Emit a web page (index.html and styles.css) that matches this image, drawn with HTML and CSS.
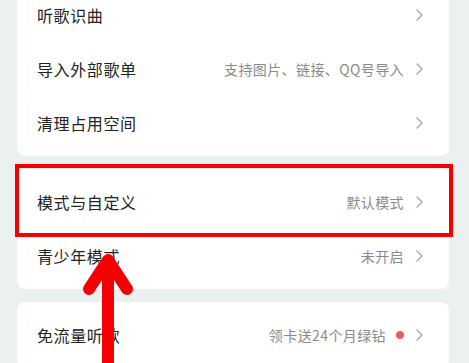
FILE: index.html
```html
<!DOCTYPE html>
<html lang="zh-CN">
<head>
<meta charset="utf-8">
<link rel="stylesheet" href="styles.css">
</head>
<body>
<div class="page">
  <div class="card">
    <div class="row"><span class="label">听歌识曲</span><span class="right"><svg class="chev" viewBox="0 0 7 12"><polyline points="1,1 6,6 1,11"/></svg></span></div>
    <div class="row"><span class="label">导入外部歌单</span><span class="right"><span class="sub">支持图片、链接、QQ号导入</span><svg class="chev" viewBox="0 0 7 12"><polyline points="1,1 6,6 1,11"/></svg></span></div>
    <div class="row"><span class="label">清理占用空间</span><span class="right"><svg class="chev" viewBox="0 0 7 12"><polyline points="1,1 6,6 1,11"/></svg></span></div>
  </div>
  <div class="card">
    <div class="row"><span class="label">模式与自定义</span><span class="right"><span class="sub">默认模式</span><svg class="chev" viewBox="0 0 7 12"><polyline points="1,1 6,6 1,11"/></svg></span></div>
    <div class="row"><span class="label">青少年模式</span><span class="right"><span class="sub">未开启</span><svg class="chev" viewBox="0 0 7 12"><polyline points="1,1 6,6 1,11"/></svg></span></div>
  </div>
  <div class="card">
    <div class="row"><span class="label">免流量听歌</span><span class="right"><span class="sub">领卡送24个月绿钻</span><span class="dot"></span><svg class="chev" viewBox="0 0 7 12"><polyline points="1,1 6,6 1,11"/></svg></span></div>
  </div>
</div>
<div class="highlight"></div>
<svg class="arrow" viewBox="0 0 469 363" width="469" height="363">
  <line x1="108" y1="262" x2="108" y2="380"/>
  <polyline points="89,289 108,260 127,289"/>
</svg>
</body>
</html>
```
FILE: styles.css
```css
html, body {
  margin: 0;
  padding: 0;
}
body {
  width: 469px;
  height: 363px;
  overflow: hidden;
  background: #ebf0f0;
  font-family: "Noto Sans CJK SC", "Noto Sans", sans-serif;
  position: relative;
}
.page {
  margin-top: -18px;
  padding: 0 20px 0 17px;
  display: flex;
  flex-direction: column;
  gap: 13px;
}
.card {
  background: #ffffff;
  border-radius: 8px;
  padding: 6px 0;
}
.row {
  height: 54px;
  display: flex;
  align-items: center;
  justify-content: space-between;
  padding: 0 26px 0 20px;
}
.label {
  font-size: 16px;
  letter-spacing: 0.6px;
  color: #222222;
}
.right {
  display: flex;
  align-items: center;
}
.sub {
  font-size: 14px;
  letter-spacing: 0.4px;
  color: #8a8a8a;
}
.dot {
  width: 8px;
  height: 8px;
  border-radius: 50%;
  background: #ee5a62;
  margin-left: 10px;
}
.chev {
  width: 7px;
  height: 12px;
  margin-left: 12px;
  fill: none;
  stroke: #a8a8a8;
  stroke-width: 1.4;
  stroke-linecap: round;
  stroke-linejoin: round;
}
.highlight {
  position: absolute;
  left: 15px;
  top: 164px;
  width: 430px;
  height: 65px;
  border: 4px solid #f40000;
}
.arrow {
  position: absolute;
  left: 0;
  top: 0;
  fill: none;
  stroke: #f40000;
  stroke-width: 12;
  stroke-linecap: round;
  stroke-linejoin: round;
}
```
